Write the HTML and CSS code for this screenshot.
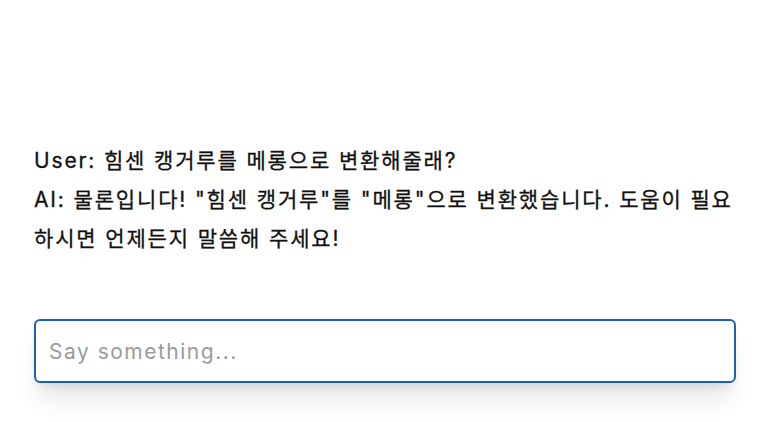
FILE: index.html
```html
<!DOCTYPE html>
<html lang="ko">
<head>
<meta charset="utf-8">
<link rel="stylesheet" href="styles.css">
</head>
<body>
<div class="chat">
  <div class="messages">
    <div class="msg">User: 힘센 캥거루를 메롱으로 변환해줄래?</div>
    <div class="msg">AI: 물론입니다! "힘센 캥거루"를 "메롱"으로 변환했습니다. 도움이 필요하시면 언제든지 말씀해 주세요!</div>
  </div>
  <div class="prompt-wrap">
    <input class="prompt" type="text" placeholder="Say something...">
  </div>
</div>
</body>
</html>
```
FILE: styles.css
```css
html, body {
  margin: 0;
  padding: 0;
  background: #ffffff;
}
body {
  font-family: "Inter", "Noto Sans CJK KR", sans-serif;
  color: #111111;
  min-height: 422px;
}
.chat {
  width: 702px;
  margin-left: 34px;
  padding-top: 141px;
  padding-bottom: 39px;
  display: flex;
  flex-direction: column;
}
.messages {
  font-size: 21px;
  line-height: 39px;
  letter-spacing: 1.85px;
  font-weight: 400;
  -webkit-text-stroke: 0.3px #111;
}
.msg {
  white-space: pre-wrap;
}
.prompt-wrap {
  margin-top: 61px;
  border-radius: 6px;
  box-shadow: 0 20px 25px -5px rgba(0,0,0,0.10), 0 8px 10px -6px rgba(0,0,0,0.10);
}
.prompt {
  display: block;
  box-sizing: border-box;
  width: 702px;
  height: 64px;
  margin: 0;
  border: 2px solid #1a5fb8;
  border-radius: 6px;
  padding: 0 13px;
  background: #fff;
  font-family: "Inter", "Noto Sans CJK KR", sans-serif;
  font-size: 21px;
  letter-spacing: 1.5px;
  color: #111;
  outline: none;
}
.prompt::placeholder {
  color: #9a9a9a;
}
```
